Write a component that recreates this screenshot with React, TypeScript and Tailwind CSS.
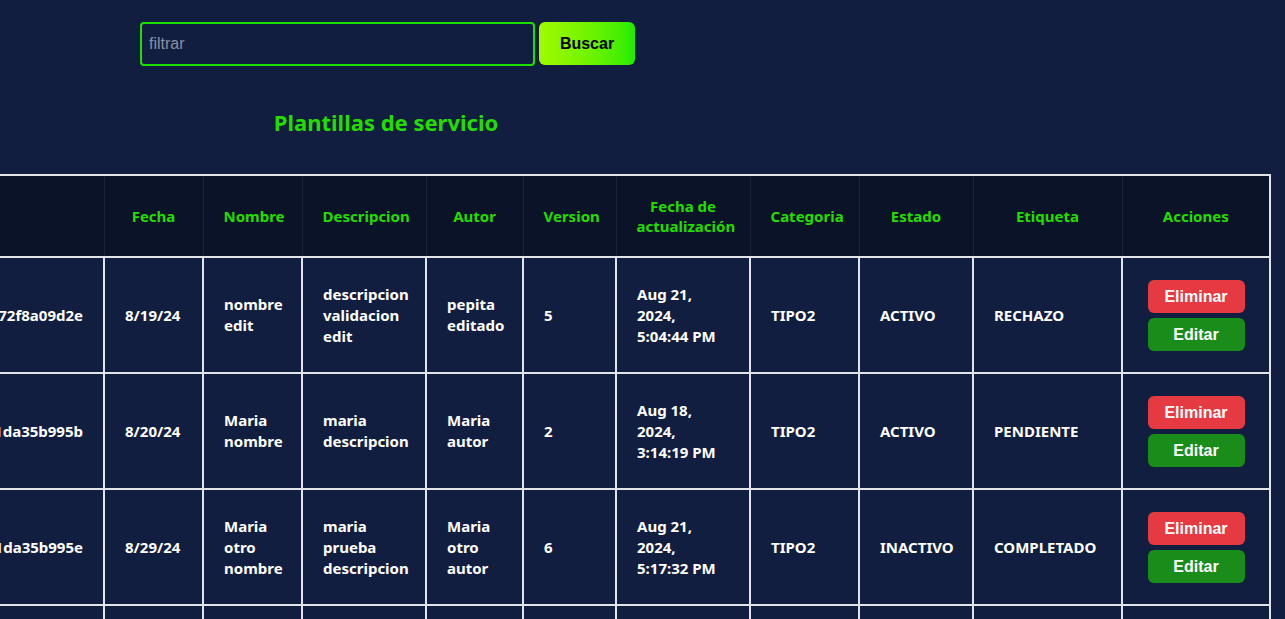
import React from "react";

type Plantilla = {
  id: string;
  fecha: string;
  nombre: string;
  descripcion: string;
  autor: string;
  version: string;
  actualizacion: string;
  categoria: string;
  estado: string;
  etiqueta: string;
};

const plantillas: Plantilla[] = [
  {
    id: "66c4f1b2e3a572f8a09d2e",
    fecha: "8/19/24",
    nombre: "nombre edit",
    descripcion: "descripcion validacion edit",
    autor: "pepita editado",
    version: "5",
    actualizacion: "Aug 21, 2024, 5:04:44 PM",
    categoria: "TIPO2",
    estado: "ACTIVO",
    etiqueta: "RECHAZO",
  },
  {
    id: "66c4f3c1a7b2e1da35b995b",
    fecha: "8/20/24",
    nombre: "Maria nombre",
    descripcion: "maria descripcion",
    autor: "Maria autor",
    version: "2",
    actualizacion: "Aug 18, 2024, 3:14:19 PM",
    categoria: "TIPO2",
    estado: "ACTIVO",
    etiqueta: "PENDIENTE",
  },
  {
    id: "66c4f3c1a7b2e1da35b995e",
    fecha: "8/29/24",
    nombre: "Maria otro nombre",
    descripcion: "maria prueba descripcion",
    autor: "Maria otro autor",
    version: "6",
    actualizacion: "Aug 21, 2024, 5:17:32 PM",
    categoria: "TIPO2",
    estado: "INACTIVO",
    etiqueta: "COMPLETADO",
  },
  {
    id: "66c4f3c1a7b2e1da35b9960",
    fecha: "8/30/24",
    nombre: "Juan nombre",
    descripcion: "juan descripcion",
    autor: "Juan autor",
    version: "1",
    actualizacion: "Aug 30, 2024, 9:02:11 AM",
    categoria: "TIPO1",
    estado: "ACTIVO",
    etiqueta: "PENDIENTE",
  },
];

const headers = [
  "",
  "Fecha",
  "Nombre",
  "Descripcion",
  "Autor",
  "Version",
  "Fecha de actualización",
  "Categoria",
  "Estado",
  "Etiqueta",
  "Acciones",
];

const widths = [
  "w-[245px]",
  "w-[99px]",
  "w-[99px]",
  "w-[124px]",
  "w-[97px]",
  "w-[93px]",
  "w-[134px]",
  "w-[109px]",
  "w-[114px]",
  "w-[149px]",
  "w-[148px]",
];

const font = "font-['Segoe_UI','Noto_Sans',sans-serif]";

export default function App() {
  return (
    <div className={`min-h-screen bg-[#121e3f] overflow-hidden ${font}`}>
      {/* buscador */}
      <div className="pt-[22px] pl-[140px] flex gap-[4px]">
        <input
          placeholder="filtrar"
          className="w-[395px] h-[44px] rounded-[4px] border-2 border-[#1ee000] bg-[#121e3f] px-[7px] text-[16px] text-white placeholder:text-[#8b8fa3] outline-none font-['Liberation_Sans',Arial,sans-serif]"
        />
        <button className="w-[96px] h-[43px] rounded-[6px] bg-gradient-to-r from-[#a0fb00] to-[#1aec00] text-black text-[16px] font-bold font-['Liberation_Sans',Arial,sans-serif]">
          Buscar
        </button>
      </div>

      <div className="w-[772px] pt-[41px] text-center">
        <h2 className="text-[22px] font-bold text-[#22dd00] leading-[30px]">Plantillas de servicio</h2>
      </div>

      {/* tabla */}
      <div className="flex justify-end pr-[14px] pt-[37px]">
        <table className="w-[1412px] shrink-0 table-fixed border-collapse border-2 border-[#e2e4ea] text-[15px] leading-[21px]">
          <thead>
            <tr className="bg-[#0b1328]">
              {headers.map((h, i) => (
                <th
                  key={i}
                  className={`${widths[i]} border border-[#1a2438] px-5 py-5 text-center font-bold text-[#22dd00] leading-[20px]`}
                >
                  {h}
                </th>
              ))}
            </tr>
          </thead>
          <tbody>
            {plantillas.map((p) => (
              <tr key={p.id} className="border-t-2 border-[#e2e4ea]">
                {[
                  p.id,
                  p.fecha,
                  p.nombre,
                  p.descripcion,
                  p.autor,
                  p.version,
                  p.actualizacion,
                  p.categoria,
                  p.estado,
                  p.etiqueta,
                ].map((v, i) => (
                  <td
                    key={i}
                    className={`border-2 border-[#e2e4ea] px-5 py-[21.5px] text-left font-bold text-white ${i === 0 ? "text-right whitespace-nowrap" : ""}`}
                  >
                    {v}
                  </td>
                ))}
                <td className="border-2 border-[#e2e4ea] px-5 py-[21.5px]">
                  <div className="flex flex-col items-center gap-[5px] font-['Liberation_Sans',Arial,sans-serif]">
                    <button className="w-[97px] h-[33px] rounded-[6px] bg-[#e53a41] text-white text-[16px] font-bold">
                      Eliminar
                    </button>
                    <button className="w-[97px] h-[33px] rounded-[6px] bg-[#1a8c1a] text-white text-[16px] font-bold">
                      Editar
                    </button>
                  </div>
                </td>
              </tr>
            ))}
          </tbody>
        </table>
      </div>
    </div>
  );
}
